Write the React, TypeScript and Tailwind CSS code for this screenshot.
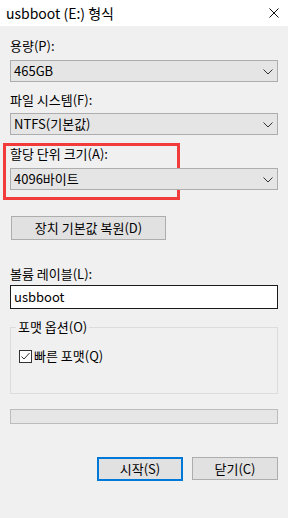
import React from "react";

const font = { fontFamily: '"Noto Sans CJK KR", "Noto Sans", sans-serif' };

function Chevron() {
  return (
    <svg width="10" height="6" viewBox="0 0 10 6" className="absolute right-[4px] top-[8px]">
      <path d="M0.5 0.5 L5 5 L9.5 0.5" fill="none" stroke="#333" strokeWidth="1" />
    </svg>
  );
}

function Combo({ value }: { value: string }) {
  return (
    <div className="relative h-[22px] w-[268px] border border-[#adadad] bg-[#e5e5e5] pl-[3px] text-[13px] leading-[20px] text-black">
      {value}
      <Chevron />
    </div>
  );
}

export default function App() {
  return (
    <div className="w-[288px] h-[518px] bg-[#f0f0f0] text-black text-[13px]" style={font}>
      <div className="h-[26px] bg-white flex items-center justify-between pl-[6px] pr-[9px]">
        <span className="text-[14px] leading-[18px]">usbboot (E:) 형식</span>
        <svg width="10" height="10" viewBox="0 0 10 10">
          <path d="M0.5 0.5 L9.5 9.5 M9.5 0.5 L0.5 9.5" stroke="#111" strokeWidth="1" />
        </svg>
      </div>
      <div className="flex flex-col px-[10px]">
        <div className="mt-[12px] leading-[16px]">용량(P):</div>
        <div className="mt-[6px]"><Combo value="465GB" /></div>
        <div className="mt-[10px] leading-[16px]">파일 시스템(F):</div>
        <div className="mt-[5px]"><Combo value="NTFS(기본값)" /></div>
        <div className="relative mt-[11px]">
          <div className="absolute left-[-7px] top-[-3px] w-[177px] h-[57px] border-[3px] border-[#f23b3b]" />
          <div className="leading-[16px]">할당 단위 크기(A):</div>
          <div className="mt-[6px]"><Combo value="4096바이트" /></div>
        </div>
        <button className="mt-[26px] ml-[1px] h-[24px] w-[155px] border border-[#adadad] bg-[#e1e1e1] text-[13px] leading-[20px]">
          장치 기본값 복원(D)
        </button>
        <div className="mt-[26px] leading-[16px]">볼륨 레이블(L):</div>
        <div className="mt-[3px] h-[24px] w-[268px] border border-[#1a1a1a] bg-white pl-[3px] leading-[22px]">usbboot</div>
        <div className="relative mt-[18px] h-[67px] w-[268px] border border-[#dcdcdc]">
          <div className="absolute left-[5px] top-[-9px] bg-[#f0f0f0] px-[2px] leading-[16px]">포맷 옵션(O)</div>
          <div className="flex items-center mt-[20px] ml-[8px]">
            <div className="w-[13px] h-[13px] border border-[#333] bg-white flex items-center justify-center">
              <svg width="11" height="11" viewBox="0 0 11 11">
                <path d="M1.5 5.5 L4 8 L9.5 2" fill="none" stroke="#333" strokeWidth="1" />
              </svg>
            </div>
            <span className="ml-[2px] leading-[16px]">빠른 포맷(Q)</span>
          </div>
        </div>
        <div className="mt-[15px] h-[15px] w-[268px] border border-[#bcbcbc] bg-[#e6e6e6]" />
        <div className="mt-[33px] flex justify-end gap-[9px]">
          <button className="h-[24px] w-[86px] border-2 border-[#0078d7] bg-[#e1e1e1] text-[13px] leading-[18px]">시작(S)</button>
          <button className="h-[23px] w-[86px] border border-[#adadad] bg-[#e1e1e1] text-[13px] leading-[20px]">닫기(C)</button>
        </div>
      </div>
    </div>
  );
}
